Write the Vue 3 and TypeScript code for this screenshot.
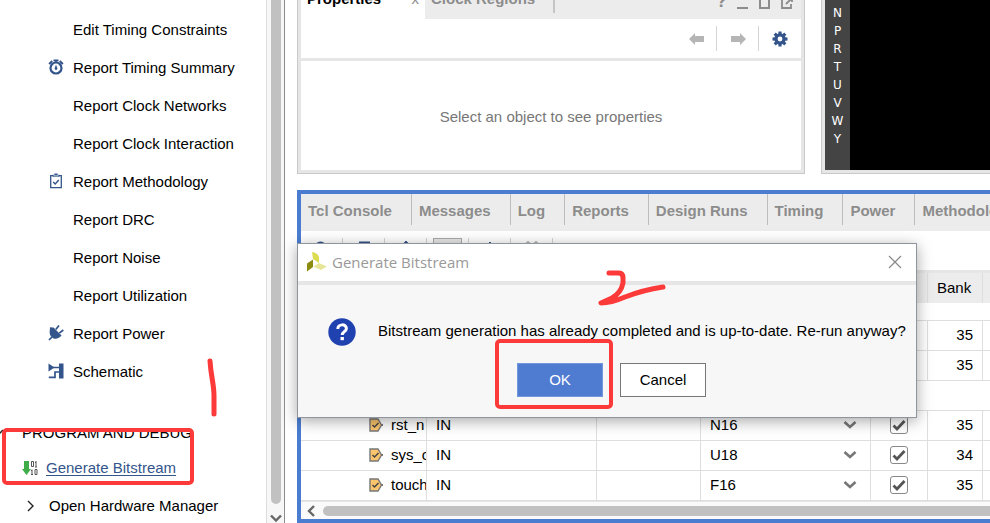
<script setup lang="ts">
import { ref } from 'vue'

interface FlowItem {
  label: string
  icon?: 'clock' | 'clipboard' | 'plug' | 'schematic'
}

interface PortRow {
  name?: string
  direction?: string
  pin?: string
  fixed?: boolean
  bank?: string
  group?: boolean
}

const flowItems: FlowItem[] = [
  { label: 'Edit Timing Constraints' },
  { label: 'Report Timing Summary', icon: 'clock' },
  { label: 'Report Clock Networks' },
  { label: 'Report Clock Interaction' },
  { label: 'Report Methodology', icon: 'clipboard' },
  { label: 'Report DRC' },
  { label: 'Report Noise' },
  { label: 'Report Utilization' },
  { label: 'Report Power', icon: 'plug' },
  { label: 'Schematic', icon: 'schematic' },
]

const packageRows: string[] = ['N', 'P', 'R', 'T', 'U', 'V', 'W', 'Y']
const tabs: string[] = ['Tcl Console', 'Messages', 'Log', 'Reports', 'Design Runs', 'Timing', 'Power', 'Methodology']

const ports = ref<PortRow[]>([
  { bank: '35' },
  { bank: '35' },
  { group: true },
  { name: 'rst_n', direction: 'IN', pin: 'N16', fixed: true, bank: '35' },
  { name: 'sys_c', direction: 'IN', pin: 'U18', fixed: true, bank: '34' },
  { name: 'touch', direction: 'IN', pin: 'F16', fixed: true, bank: '35' },
])
</script>

<template>
  <div class="app">
    <aside class="sidebar">
      <nav class="flow">
        <ul class="list">
          <li v-for="item in flowItems" :key="item.label" class="item">
            <span class="item-icon">
              <svg v-if="item.icon === 'clock'" width="16" height="16" viewBox="0 0 16 16">
                <circle cx="8" cy="9" r="5.5" fill="none" stroke="#34558b" stroke-width="2.2" />
                <path d="M5.500.5h5v1.800H9.200V4H6.800V2.300H5.500zM.4 4.200 3.600 1.300l1.300 1.500L1.800 5.700zM15.600 4.200l-3.200-2.900-1.300 1.500 3.100 2.900z" fill="#34558b" />
                <path d="M8 5.500 9.500 9.700 8 11.200 6.500 9.700z" fill="#34558b" />
              </svg>
              <svg v-else-if="item.icon === 'clipboard'" width="16" height="16" viewBox="0 0 16 16">
                <path d="M2.700 2.700h10.600v12H2.700z" fill="#fff" stroke="#34558b" stroke-width="1.300" />
                <path d="M4.500 3.800V1.700h2V.5h3v1.200h2v2.100z" fill="#34558b" />
                <path d="M5.500 2.800h5" stroke="#fff" stroke-width=".7" />
                <path d="m5.200 9 2 2 3.600-4" fill="none" stroke="#34558b" stroke-width="1.400" />
              </svg>
              <svg v-else-if="item.icon === 'plug'" width="16" height="16" viewBox="0 0 16 16">
                <path d="M1 15l3-3M7.800 4.500l3.200-4M11.300 8.200l4-3.200" stroke="#34558b" stroke-width="1.700" fill="none" />
                <path d="M5.500 2.500 13.500 10.500C11.500 13 7 15.200 4 12.400.5 9.500 2 5 2 2.500 3.400 1.500 4.700 3 5.500 2.500z" fill="#34558b" />
              </svg>
              <svg v-else-if="item.icon === 'schematic'" width="16" height="16" viewBox="0 0 16 16">
                <path d="M.5.500 6.500 4.500.5 8.500zM11 .5h4.500v15H11z" fill="#34558b" />
                <path d="M5 4.500h6M11 9H7v5.300H.8" fill="none" stroke="#34558b" stroke-width="1.700" />
              </svg>
            </span>
            <span>{{ item.label }}</span>
          </li>
        </ul>
        <div class="section">
          <svg class="section-arrow" width="8" height="8" viewBox="0 0 8 8">
            <path d="M-3 2 1 6l4-4" transform="translate(-2 -1)" fill="none" stroke="#222" stroke-width="1.500" />
          </svg>
          <span>PROGRAM AND DEBUG</span>
        </div>
        <div class="item bitstream">
          <svg width="16" height="16" viewBox="0 0 16 16">
            <path d="M2 1h5v8h2l-4.500 6L0 9h2z" fill="#3fae49" />
            <path d="M9.500 1.500h2v5h-2zM14 1v6M13 2.500h1M13 7h2M10 9.500v5M9 10.500h1M9 14.500h2M13 9.500h2v5h-2z" fill="none" stroke="#555" stroke-width="1" />
          </svg>
          <a href="#" class="link">Generate Bitstream</a>
        </div>
        <div class="item hardware">
          <svg width="8" height="12" viewBox="0 0 8 12">
            <path d="m1 1 5 5-5 5" fill="none" stroke="#222" stroke-width="1.400" />
          </svg>
          <span>Open Hardware Manager</span>
        </div>
      </nav>
      <div class="vscroll">
        <div class="vthumb"></div>
        <svg width="12" height="8" viewBox="0 0 12 8">
          <path d="m1 1.500 5 5 5-5" fill="none" stroke="#666" stroke-width="2.400" />
        </svg>
      </div>
    </aside>

    <main class="workspace">
      <div class="upper">
        <section class="panel">
          <header class="prop-tabs">
            <div class="prop-tab active"><span>Properties</span><span class="tab-x">x</span></div>
            <div class="prop-tab"><span>Clock Regions</span></div>
            <i class="prop-sep"></i>
            <div class="win-icons">
              <b>?</b>
              <svg width="12" height="14" viewBox="0 0 12 14"><path d="M0 12h11" stroke="#8c8c8c" stroke-width="2" /></svg>
              <svg width="12" height="14" viewBox="0 0 12 14"><path d="M1 2h9v10H1z" fill="none" stroke="#8c8c8c" stroke-width="2" /></svg>
              <svg width="12" height="14" viewBox="0 0 12 14"><path d="M5 3H1v9h9V8M5 8l5-5M7 2h4v4" fill="none" stroke="#8c8c8c" stroke-width="1.800" /></svg>
            </div>
          </header>
          <div class="prop-tools">
            <button type="button" class="tool" aria-label="Back">
              <svg width="16" height="12" viewBox="0 0 16 12"><path d="M1 6 7 0v3h9v6H7v3z" fill="#b5b5b5" /></svg>
            </button>
            <button type="button" class="tool" aria-label="Forward">
              <svg width="16" height="12" viewBox="0 0 16 12"><path d="M16 6l-6-6v3H1v6h9v3z" fill="#b5b5b5" /></svg>
            </button>
            <button type="button" class="tool" aria-label="Settings">
              <svg width="16" height="16" viewBox="-8 -8 16 16">
                <g fill="#34558b">
                  <path d="M-1.600-7.500h3.200v15h-3.200z" />
                  <path d="M-1.600-7.500h3.200v15h-3.200z" transform="rotate(45)" />
                  <path d="M-1.600-7.500h3.200v15h-3.200z" transform="rotate(90)" />
                  <path d="M-1.600-7.500h3.200v15h-3.200z" transform="rotate(135)" />
                  <circle r="5.700" />
                </g>
                <circle r="2.400" fill="#fff" />
              </svg>
            </button>
          </div>
          <p class="empty">Select an object to see properties</p>
        </section>
        <section class="panel device">
          <ol class="list axis">
            <li v-for="row in packageRows" :key="row">{{ row }}</li>
          </ol>
          <div class="canvas"></div>
        </section>
      </div>

      <section class="lower">
        <div class="tabs">
          <button v-for="tab in tabs" :key="tab" type="button" class="tab">{{ tab }}</button>
        </div>
        <div class="tools">
          <button type="button" class="tool" aria-label="Search">
            <svg width="16" height="16" viewBox="0 0 16 16"><circle cx="6.500" cy="6.500" r="5" fill="none" stroke="#34558b" stroke-width="2" /><path d="m10 10 5 5" stroke="#34558b" stroke-width="2" /></svg>
          </button>
          <button type="button" class="tool" aria-label="Collapse all">
            <svg width="16" height="16" viewBox="0 0 16 16"><path d="M3 1.500h11M8 15V9M4 5l4 4 4-4" fill="none" stroke="#34558b" stroke-width="2" /></svg>
          </button>
          <button type="button" class="tool" aria-label="Expand all">
            <svg width="16" height="16" viewBox="0 0 16 16"><path d="M8 0v15M4 5l4-4 4 4" fill="none" stroke="#34558b" stroke-width="2" /></svg>
          </button>
          <button type="button" class="tool pressed" aria-label="Group">
            <span><svg width="16" height="16" viewBox="0 0 16 16"><path d="M11 0h3v15h-3zM1 6h10" fill="#34558b" stroke="#34558b" /></svg></span>
          </button>
          <button type="button" class="tool" aria-label="Add">
            <svg width="16" height="16" viewBox="0 0 16 16"><path d="M8 1v14M1 8h14" stroke="#34558b" stroke-width="2" /></svg>
          </button>
          <button type="button" class="tool" aria-label="Swap">
            <svg width="16" height="16" viewBox="0 0 16 16"><path d="m1 4 3-3 3 3M9 4l3-3 3 3" fill="none" stroke="#b5b5b5" stroke-width="2" /></svg>
          </button>
        </div>
        <div class="grid">
          <table class="ports">
            <colgroup>
              <col class="c-name" /><col class="c-dir" /><col class="c-pair" /><col class="c-pin" /><col class="c-fixed" /><col class="c-bank" /><col />
            </colgroup>
            <thead>
              <tr><th></th><th></th><th></th><th></th><th></th><th>Bank</th><th></th></tr>
            </thead>
            <tbody>
              <tr class="partial"><td colspan="7"></td></tr>
              <template v-for="(port, i) in ports" :key="i">
                <tr v-if="port.group"><td colspan="7" class="group"></td></tr>
                <tr v-else>
                  <td>
                    <div v-if="port.name" class="port">
                      <svg width="14" height="14" viewBox="0 0 14 14">
                        <path d="M1 1h8l3.500 6L9 13H1z" fill="#fbc56d" stroke="#777" stroke-width="1.400" />
                        <path d="M12 7h2" stroke="#777" stroke-width="2" />
                        <path d="m3.500 7 2 2 4-4" fill="none" stroke="#444" stroke-width="1.500" />
                      </svg>
                      <span>{{ port.name }}</span>
                    </div>
                  </td>
                  <td>{{ port.direction }}</td>
                  <td></td>
                  <td>
                    <div v-if="port.pin" class="pin">
                      <select :aria-label="`Package pin of ${port.name}`">
                        <option>{{ port.pin }}</option>
                      </select>
                      <svg width="14" height="10" viewBox="0 0 14 10"><path d="m1.500 2 5.500 5 5.500-5" fill="none" stroke="#777" stroke-width="2.600" /></svg>
                    </div>
                  </td>
                  <td>
                    <label v-if="port.pin" class="check">
                      <input v-model="port.fixed" type="checkbox" :aria-label="`Fix ${port.name}`" />
                      <svg v-if="port.fixed" width="14" height="14" viewBox="0 0 14 14"><path d="m1.500 7.500 3.500 3.500 7.500-8" fill="none" stroke="#555" stroke-width="2.800" /></svg>
                    </label>
                  </td>
                  <td class="num">{{ port.bank }}</td>
                  <td></td>
                </tr>
              </template>
            </tbody>
          </table>
        </div>
        <div class="hscroll">
          <svg width="8" height="12" viewBox="0 0 8 12"><path d="M7 1 2 6l5 5" fill="none" stroke="#666" stroke-width="2.400" /></svg>
          <div class="hthumb"></div>
        </div>
      </section>
    </main>

    <div class="dialog" role="dialog" aria-labelledby="dialog-title">
      <header class="dialog-head">
        <svg width="20" height="20" viewBox="0 0 20 20">
          <path d="M5 0C9 .5 12 3 12 6v5L6 7z" fill="#dcdc50" />
          <path d="M0 11.500 6 7.500v7.500L0 19.500z" fill="#8c8c10" />
          <path d="M6.500 14.500 12 11l8 3.500-6 3.500z" fill="#e6e696" />
        </svg>
        <h1 id="dialog-title">Generate Bitstream</h1>
        <button type="button" class="close" aria-label="Close">
          <svg width="14" height="14" viewBox="0 0 14 14"><path d="m1 1 12 12M13 1 1 13" stroke="#888" stroke-width="1.200" /></svg>
        </button>
      </header>
      <div class="message">
        <svg width="28" height="28" viewBox="0 0 28 28">
          <circle cx="14" cy="14" r="13.700" fill="#2041b0" />
          <path d="M9.800 11c0-5.500 8.600-5.300 8.600-.6 0 3.200-4.200 3.300-4.200 6.600" fill="none" stroke="#fff" stroke-width="3" />
          <path d="M12.500 19h3.400v3.200h-3.400z" fill="#fff" />
        </svg>
        <p>Bitstream generation has already completed and is up-to-date. Re-run anyway?</p>
      </div>
      <div class="actions">
        <button type="button" class="btn primary">OK</button>
        <button type="button" class="btn">Cancel</button>
      </div>
    </div>

    <svg class="marks" width="990" height="523" viewBox="0 0 990 523" aria-hidden="true">
      <g fill="none" stroke="#fd3a3a" stroke-width="4" stroke-linecap="round" stroke-linejoin="round">
        <rect x="4" y="430" width="188" height="53" rx="3" />
        <rect x="497" y="341" width="114" height="66" rx="3" />
        <path d="M210 361C211 377 214 384 214 396V414" stroke-width="5" />
        <path d="M609 273H619Q623 273 623 278V283Q621 293 612 298L601 303Q611 303 625 297Q643 290 663 287" stroke-width="5" />
      </g>
    </svg>
  </div>
</template>

<style>
body {
  margin: 0;
  background: #fff;
}
</style>

<style scoped>
.app {
  position: relative;
  display: flex;
  height: 100vh;
  overflow: hidden;
  font: 15px/18px "Liberation Sans", Arial, sans-serif;
  color: #000;
}
.app * {
  box-sizing: border-box;
}
button,
select {
  font: inherit;
}
.list {
  margin: 0;
  padding: 0;
  list-style: none;
}
svg {
  flex: none;
  display: block;
}

/* Flow navigator */
.sidebar {
  display: flex;
  flex: none;
  width: 285px;
  border-right: 1px solid #8c8c8c;
}
.flow {
  flex: 1;
  padding-top: 11px;
  white-space: nowrap;
}
.item {
  display: flex;
  align-items: center;
  gap: 9px;
  height: 38px;
  padding-left: 48px;
}
.item-icon {
  width: 16px;
  height: 18px;
}
.section {
  display: flex;
  align-items: center;
  gap: 14px;
  height: 32px;
  margin-top: 26px;
}
.bitstream {
  gap: 8px;
  padding-left: 22px;
}
.hardware {
  gap: 14px;
  padding-left: 27px;
}
.link {
  color: #34558b;
  text-decoration: underline;
  text-underline-offset: 2px;
}
.vscroll {
  display: flex;
  flex-direction: column;
  align-items: center;
  gap: 10px;
  width: 18px;
  padding-bottom: 1px;
  border-left: 1px solid #ddd;
  background: #f7f7f7;
}
.vthumb {
  flex: 1;
  width: 10px;
  border-radius: 0 0 5px 5px;
  background: #c1c1c1;
}

/* Panels */
.workspace {
  display: flex;
  flex: 1;
  flex-direction: column;
  gap: 16px;
  min-width: 0;
  padding-left: 12px;
}
.upper {
  display: grid;
  grid-template-columns: minmax(0, 508fr) minmax(0, 169fr);
  gap: 16px;
  height: 174px;
}
.panel {
  display: flex;
  flex-direction: column;
  border: solid #c9c9c9;
  border-width: 0 1px 1px;
  box-shadow: inset 3px 0 #e6e6e6, inset -3px -3px #e6e6e6;
  padding: 0 3px 3px;
}
.prop-tabs {
  display: flex;
  height: 19px;
  background: #ececec;
  color: #8c8c8c;
  font-weight: bold;
}
.prop-tab {
  display: flex;
  align-items: flex-end;
  padding: 0 6px 11px;
  white-space: nowrap;
}
.prop-tab.active {
  justify-content: space-between;
  width: 124px;
  background: #fff;
  color: #000;
}
.tab-x {
  color: #8c8c8c;
  font-weight: normal;
}
.prop-sep {
  width: 2px;
  height: 13px;
  margin-left: 12px;
  background: #c4c4c4;
}
.win-icons {
  display: flex;
  align-items: flex-end;
  gap: 10px;
  margin-left: auto;
  padding: 0 8px 9px 0;
}
.win-icons b {
  font-size: 18px;
}
.prop-tools {
  display: flex;
  align-items: center;
  justify-content: flex-end;
  height: 42px;
  border-bottom: 3px solid #e6e6e6;
}
.tool {
  display: grid;
  place-items: center;
  width: 42px;
  height: 25px;
  padding: 0;
  border: 0;
  border-right: 1px solid #d4d4d4;
  background: none;
}
.prop-tools .tool:last-child {
  border-right: 0;
}
.empty {
  display: grid;
  flex: 1;
  place-items: center;
  margin: 0;
  padding-top: 2px;
  color: #777;
}
.device {
  flex-direction: row;
  border-right: 0;
  padding-right: 0;
}
.axis {
  width: 25px;
  padding-top: 4px;
  background: #444;
  color: #fff;
  font: 12px/18px "DejaVu Sans", sans-serif;
  text-align: center;
}
.canvas {
  flex: 1;
  background: #000;
}

/* Lower window */
.lower {
  display: flex;
  flex: 1;
  flex-direction: column;
  min-height: 0;
  border: 4px solid #4a7dd0;
  border-right: 0;
  overflow: hidden;
}
.tabs {
  display: flex;
  flex: none;
  height: 37px;
  padding-bottom: 6px;
  background: #ececec;
}
.tab {
  flex: none;
  padding: 3px 19px 0 7px;
  border: 0;
  border-right: 1px solid #bdbdbd;
  background: none;
  color: #8c8c8c;
  font-weight: bold;
}
.tools {
  display: flex;
  flex: none;
  align-items: center;
  height: 39px;
}
.tools .tool {
  place-items: start center;
  padding-top: 3px;
}
.tools .pressed {
  place-items: center;
  padding-top: 0;
}
.pressed span {
  display: grid;
  place-items: start center;
  width: 29px;
  height: 29px;
  padding-top: 4px;
  border: 1px solid #aaa;
  background: #e6e6e6;
}
.grid {
  flex: 1;
  min-height: 0;
  overflow: hidden;
  border-top: 3px solid #e6e6e6;
}
.ports {
  width: 100%;
  table-layout: fixed;
  border-collapse: separate;
  border-spacing: 0;
}
.c-name { width: 126px; }
.c-dir,
.c-pin { width: 170px; }
.c-pair { width: 104px; }
.c-fixed { width: 57px; }
.c-bank { width: 55px; }
.ports th,
.ports td {
  height: 30px;
  padding: 0 9px;
  overflow: hidden;
  border-right: 1px solid #dedede;
  border-bottom: 1px solid #dedede;
  font-weight: normal;
  text-align: left;
  white-space: nowrap;
}
.ports td {
  padding-bottom: 2px;
}
.ports th {
  border-bottom-color: #ececec;
  background: #ececec;
}
.ports th:last-child,
.ports td:last-child {
  padding: 0;
  border-right: 0;
}
.ports .partial td {
  height: 18px;
}
.ports td:first-child {
  padding-left: 0;
  padding-right: 0;
}
.ports .num {
  text-align: right;
}
.port {
  display: flex;
  align-items: center;
  gap: 7px;
  padding-left: 69px;
}
.port svg {
  margin-left: -1px;
  margin-right: 1px;
}
.pin {
  display: grid;
  grid-template-columns: 1fr 18px;
  align-items: center;
}
.pin select {
  grid-area: 1 / 1 / 2 / 3;
  padding: 0;
  border: 0;
  background: none;
  color: inherit;
  appearance: none;
}
.pin svg {
  grid-area: 1 / 2;
  pointer-events: none;
}
.check {
  display: grid;
  place-items: center;
}
.check input {
  grid-area: 1 / 1;
  width: 18px;
  height: 18px;
  margin: 0;
  border: 1px solid #888;
  border-radius: 3px;
  background: #fff;
  appearance: none;
}
.check svg {
  grid-area: 1 / 1;
  pointer-events: none;
}
.hscroll {
  display: flex;
  flex: none;
  align-items: center;
  gap: 8px;
  height: 18px;
  padding-left: 6px;
  border-top: 1px solid #e6e6e6;
  background: #fafafa;
}
.hthumb {
  flex: 1;
  height: 10px;
  border-radius: 5px 0 0 5px;
  background: #c1c1c1;
}

/* Dialog */
.dialog {
  position: absolute;
  top: 243px;
  left: 297px;
  width: 620px;
  border: 1px solid #8f959e;
  background: #f7f7f7;
  box-shadow: 0 3px 14px rgba(0, 0, 0, 0.35);
}
.dialog-head {
  display: flex;
  align-items: center;
  gap: 5px;
  height: 41px;
  padding: 0 14px 2px 9px;
  border-bottom: 4px solid #e6e6e6;
  background: #fff;
}
.dialog-head h1 {
  margin: 0;
  color: #999;
  font: 15px/20px "Open Sans", sans-serif;
}
.close {
  margin-left: auto;
  padding: 0;
  border: 0;
  background: none;
}
.message {
  display: flex;
  align-items: center;
  gap: 22px;
  padding: 33px 0 0 30px;
}
.message p {
  margin: 0;
  padding-bottom: 2px;
  white-space: nowrap;
}
.actions {
  display: flex;
  justify-content: center;
  gap: 17px;
  padding: 17px 0 20px 9px;
}
.btn {
  width: 86px;
  height: 34px;
  padding: 0;
  border: 1px solid #777;
  background: #fff;
  color: #000;
}
.primary {
  border-color: #7397dc;
  background: #4f7bd1;
  color: #fff;
}

.marks {
  position: absolute;
  top: 0;
  left: 0;
  pointer-events: none;
}
</style>
